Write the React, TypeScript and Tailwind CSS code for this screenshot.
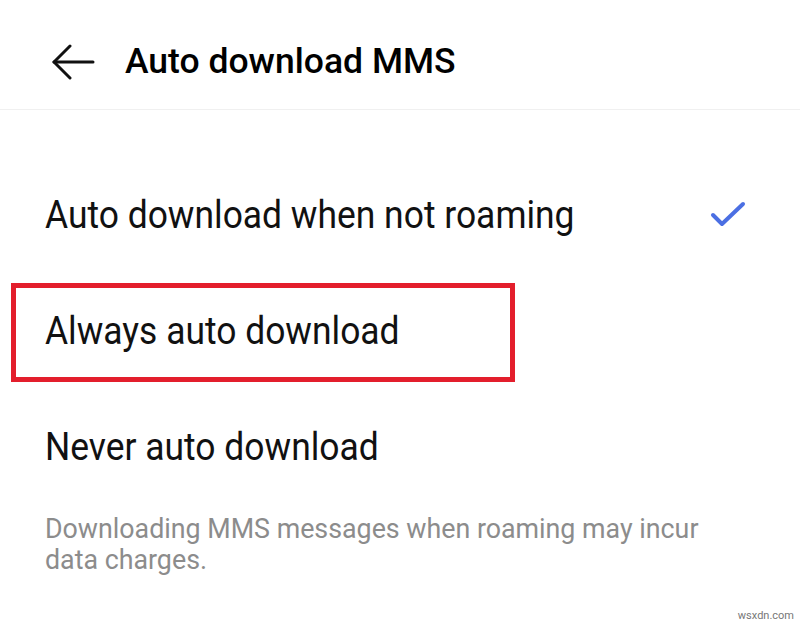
const font = { fontFamily: "Roboto, 'Noto Sans', sans-serif" };

function BackArrow() {
  return (
    <svg width="44" height="36" viewBox="0 0 44 36" fill="none" stroke="#111" strokeWidth="3" strokeLinecap="round" strokeLinejoin="round">
      <path d="M3 18 H42" />
      <path d="M19 2 L3 18 L19 34" />
    </svg>
  );
}

function Check() {
  return (
    <svg width="36" height="28" viewBox="0 0 36 28" fill="none" stroke="#4b6fe3" strokeWidth="4" strokeLinecap="round" strokeLinejoin="round">
      <path d="M3 14 L12 23 L33 3" />
    </svg>
  );
}

const options = [
  { label: "Auto download when not roaming", selected: true },
  { label: "Always auto download", selected: false, marked: true },
  { label: "Never auto download", selected: false },
];

export default function App() {
  return (
    <div className="relative h-[632px] w-[800px] overflow-hidden bg-white text-[#111]" style={font}>
      <header className="flex h-[110px] items-center border-b border-[#f0f0f0] pl-[51px] pt-[14px]">
        <BackArrow />
        <h1 className="ml-[30px] text-[35.5px] font-medium text-black">Auto download MMS</h1>
      </header>

      <ul className="pt-[47px]">
        {options.map((o) => (
          <li key={o.label} className="relative flex h-[116px] items-center justify-between pl-[45px] pr-[54px]">
            <span className="inline-block origin-left scale-x-[0.92] whitespace-nowrap text-[38.5px] leading-none">
              {o.label}
            </span>
            {o.selected && <Check />}
            {o.marked && (
              <div className="absolute left-[11px] top-[10px] h-[99px] w-[504px] border-[5px] border-[#e31e2c]" />
            )}
          </li>
        ))}
      </ul>

      <p className="mt-[9px] pl-[45px] text-[26.8px] leading-[31px] text-[#8c8c8c]">
        Downloading MMS messages when roaming may incur
        <br />
        data charges.
      </p>

      <span className="absolute bottom-[8px] right-[6px] text-[11px] text-[#777]">wsxdn.com</span>
    </div>
  );
}
